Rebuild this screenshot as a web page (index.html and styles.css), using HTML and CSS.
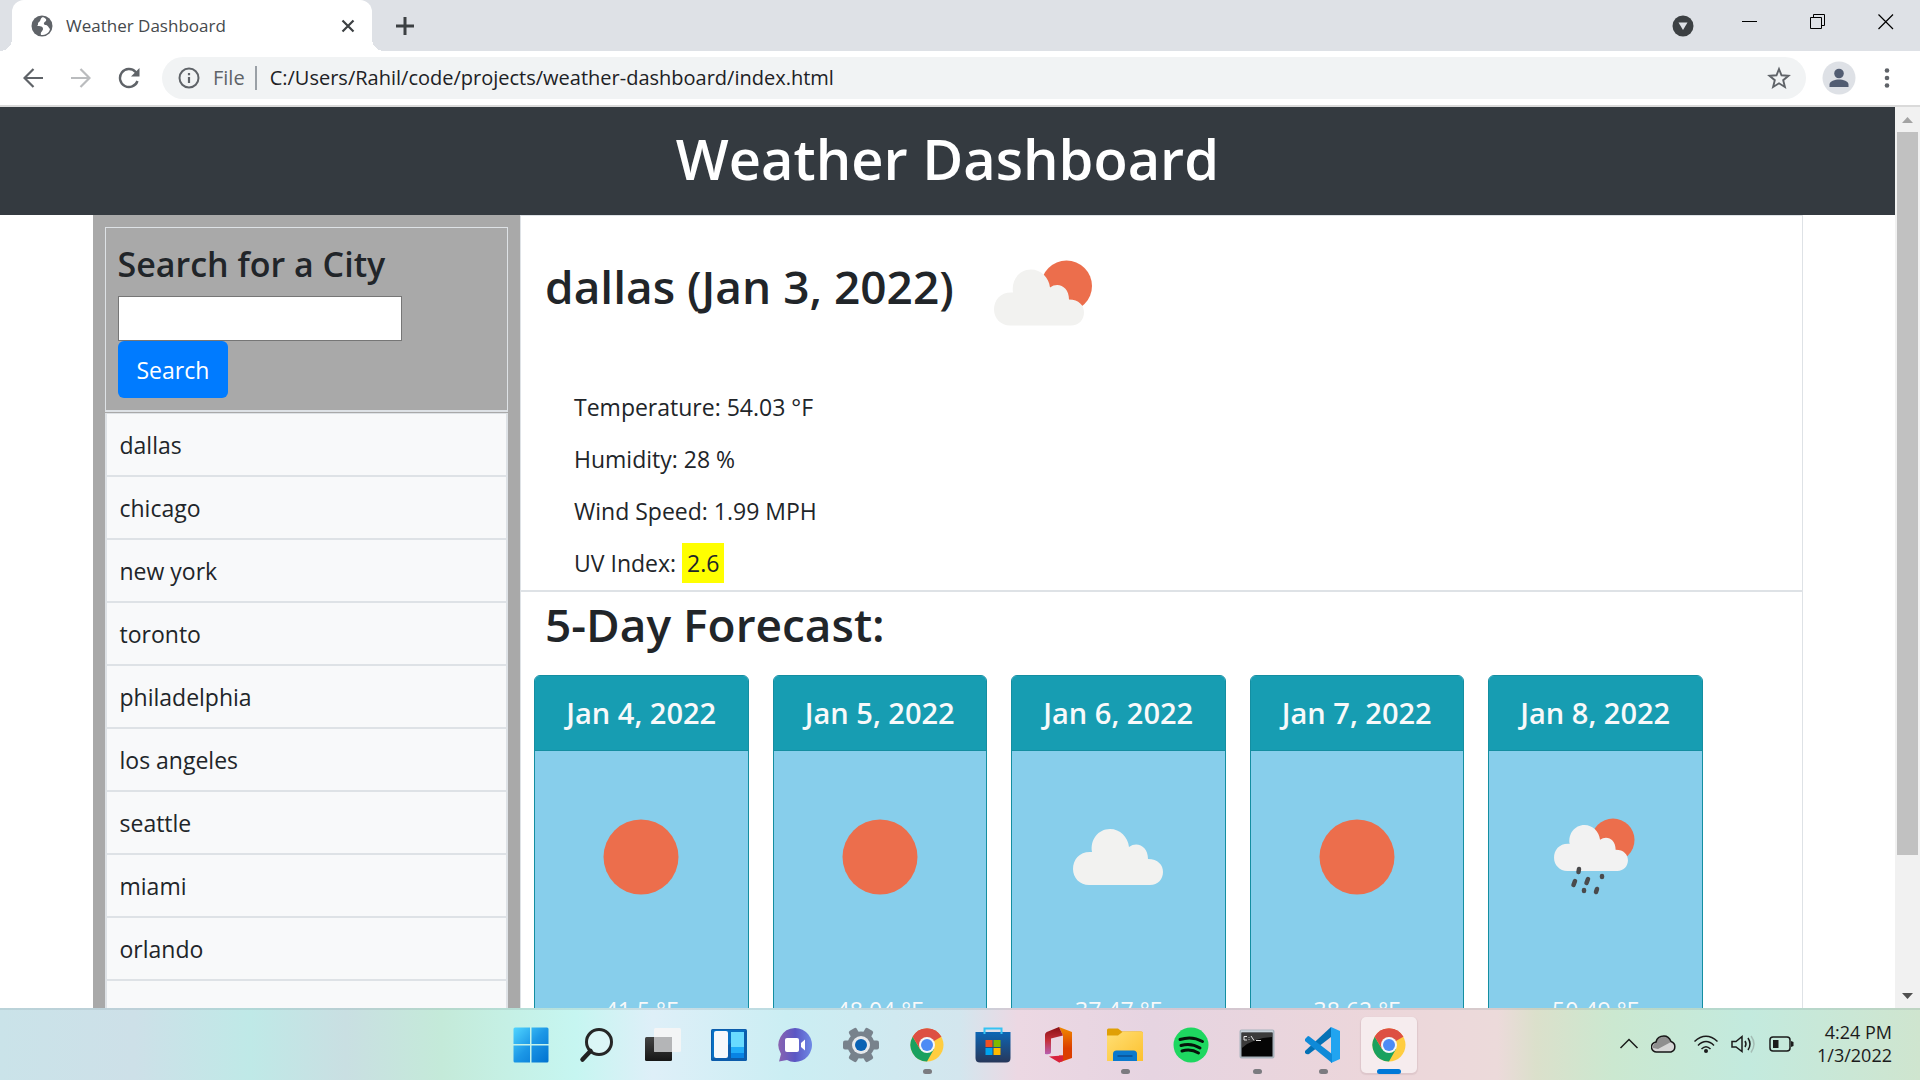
FILE: index.html
```html
<!DOCTYPE html>
<html lang="en">
<head>
<meta charset="utf-8">
<title>Weather Dashboard</title>
<link rel="stylesheet" href="styles.css">
</head>
<body>
<svg class="defs" aria-hidden="true">
  <defs>
    <symbol id="cloud" viewBox="0 0 90 56">
      <path d="M16 56C7 56 0 49 0 40C0 30 7 22 19 23C17 11 25 0 37 0C47 0 55 8 56 18C64 12 75 17 75 30C85 30 90 36 90 43C90 50 85 56 77 56Z"/>
    </symbol>
    <symbol id="chrome" viewBox="0 0 34 34">
      <circle cx="17" cy="17" r="16.5" fill="#ffcd40"/>
      <path d="M17 17L2.7 8.7A16.5 16.5 0 0 1 31.3 8.7Z" fill="#dd4f43"/>
      <path d="M10 21L2.7 8.700A16.5 16.5 0 0 0 17 33.500L24 21Z" fill="#19a15f"/>
      <path d="M17 9H31.4A16.5 16.5 0 0 0 2.7 8.7L10 21Z" fill="#dd4f43"/>
      <circle cx="17" cy="17" r="8" fill="#f4f6f8"/>
      <circle cx="17" cy="17" r="6" fill="#4c8bf5"/>
    </symbol>
    <linearGradient id="winBlue" x1="0" y1="0" x2="1" y2="1"><stop offset="0" stop-color="#50d5ff"/><stop offset=".5" stop-color="#1c97e6"/><stop offset="1" stop-color="#0072d0"/></linearGradient>
    <linearGradient id="darkBox" x1="0" y1="0" x2="0" y2="1"><stop offset="0" stop-color="#444"/><stop offset="1" stop-color="#161616"/></linearGradient>
    <linearGradient id="chatFill" x1="0" y1="0" x2="1" y2="0"><stop offset="0" stop-color="#8a63b0"/><stop offset=".5" stop-color="#5b57c4"/><stop offset="1" stop-color="#6f8ae6"/></linearGradient>
    <linearGradient id="storeFill" x1="0" y1="0" x2="0" y2="1"><stop offset="0" stop-color="#0d66b5"/><stop offset="1" stop-color="#27375a"/></linearGradient>
    <linearGradient id="officeRight" x1="0" y1="0" x2="0" y2="1"><stop offset="0" stop-color="#f08a00"/><stop offset=".6" stop-color="#dc3e00"/></linearGradient>
    <linearGradient id="officeLeft" x1="0" y1="0" x2="0" y2="1"><stop offset="0" stop-color="#8a0f14"/><stop offset=".5" stop-color="#c5303a"/><stop offset="1" stop-color="#b75fb0"/></linearGradient>
    <linearGradient id="folderFill" x1="0" y1="0" x2="1" y2="1"><stop offset="0" stop-color="#ffdf75"/><stop offset="1" stop-color="#fdc12f"/></linearGradient>
  </defs>
</svg>

<div class="tabstrip">
  <div class="tab">
    <svg width="22" height="22" viewBox="0 0 22 22"><circle cx="11" cy="11" r="10.5" fill="#5f6368"/><path d="M12 2C9 3 10 6 8 7C6 8 8 10 6 11C9 11 12 11 12 14C12 16 9 17 10 20C15 20 18 18 19 14C17 12 17 10 14 10C12 9 13 7 15 6C16 4 14 3 12 2Z" fill="#fff"/><path d="M3 11C5 12 8 12 9 14C10 16 8 17 9 19C5 18 3 15 3 11Z" fill="#5f6368"/></svg>
    <span class="tab-title">Weather Dashboard</span>
    <button class="icon-btn" aria-label="Close tab"><svg width="14" height="14" viewBox="0 0 14 14"><path d="M1.500 1.500L12.500 12.500M12.500 1.500L1.500 12.500" stroke="#3c4043" stroke-width="2.200"/></svg></button>
  </div>
  <button class="icon-btn new-tab" aria-label="New tab"><svg width="18" height="18" viewBox="0 0 18 18"><path d="M9 0V18M0 9H18" stroke="#3c4043" stroke-width="3"/></svg></button>
  <div class="window-controls">
    <button class="icon-btn tab-search" aria-label="Search tabs"><svg width="22" height="22" viewBox="0 0 22 22"><circle cx="11" cy="11" r="10.500" fill="#3c4043"/><path d="M6.500 7.500H15.500L11 15Z" fill="#dee1e6"/></svg></button>
    <button class="icon-btn" aria-label="Minimize"><svg width="16" height="16" viewBox="0 0 16 16"><path d="M0 7.500H15" stroke="#000"/></svg></button>
    <button class="icon-btn" aria-label="Restore"><svg width="16" height="16" viewBox="0 0 16 16"><path d="M.5 3.500H11.500V14.500H.5ZM3.500 3.500V.5H14.500V11.500H11.500" fill="none" stroke="#000"/></svg></button>
    <button class="icon-btn" aria-label="Close"><svg width="16" height="16" viewBox="0 0 16 16"><path d="M.5 .5L15 15M15 .5L.5 15" stroke="#000" stroke-width="1.200"/></svg></button>
  </div>
</div>

<div class="toolbar">
  <button class="icon-btn nav-btn" aria-label="Back"><svg width="20" height="20" viewBox="0 0 20 20"><path d="M20 10H2M10.500 1L1.500 10L10.500 19" fill="none" stroke="#5f6368" stroke-width="2.200"/></svg></button>
  <button class="icon-btn nav-btn" aria-label="Forward"><svg width="20" height="20" viewBox="0 0 20 20"><path d="M0 10H18M9.500 1L18.500 10L9.500 19" fill="none" stroke="#babcbe" stroke-width="2.200"/></svg></button>
  <button class="icon-btn nav-btn" aria-label="Reload"><svg width="22" height="22" viewBox="0 0 22 22"><path d="M19.500 14A9 9 0 1 1 17.500 4.800L19 6.500" fill="none" stroke="#5f6368" stroke-width="2.400"/><path d="M21.500 1V9.500H13Z" fill="#5f6368"/></svg></button>
  <div class="omnibox">
    <svg width="22" height="22" viewBox="0 0 22 22"><circle cx="11" cy="11" r="9.500" fill="none" stroke="#5f6368" stroke-width="2"/><path d="M11 10V16M11 6V8.200" stroke="#5f6368" stroke-width="2.200"/></svg>
    <span class="scheme">File</span>
    <input class="url" type="text" aria-label="Address" value="C:/Users/Rahil/code/projects/weather-dashboard/index.html">
    <button class="icon-btn" aria-label="Bookmark"><svg width="24" height="24" viewBox="0 0 24 24"><path d="M12 3L14.500 9.300L21.500 9.800L16.200 14.200L17.900 21L12 17.300L6.100 21L7.800 14.200L2.500 9.800L9.500 9.300Z" fill="none" stroke="#5f6368" stroke-width="1.900"/></svg></button>
  </div>
  <button class="icon-btn avatar" aria-label="Profile"><svg width="34" height="34" viewBox="0 0 34 34"><circle cx="17" cy="17" r="16.500" fill="#dee1e6"/><circle cx="17" cy="12.500" r="4.800" fill="#525d72"/><path d="M7.500 26V23.500C7.500 20 13 18.500 17 18.500S26.500 20 26.500 23.500V26Z" fill="#525d72"/></svg></button>
  <button class="icon-btn" aria-label="Menu"><svg width="6" height="22" viewBox="0 0 6 22"><g fill="#5f6368"><circle cx="3" cy="3.500" r="2.300"/><circle cx="3" cy="11" r="2.300"/><circle cx="3" cy="18.500" r="2.300"/></g></svg></button>
</div>

<div class="viewport">
  <div class="page">
    <header class="banner"><h1>Weather Dashboard</h1></header>
    <div class="container">
      <aside class="sidebar">
        <form class="search">
          <label for="city">Search for a City</label>
          <input id="city" type="text">
          <button type="button">Search</button>
        </form>
        <ul class="history">
          <li>dallas</li><li>chicago</li><li>new york</li><li>toronto</li><li>philadelphia</li><li>los angeles</li><li>seattle</li><li>miami</li><li>orlando</li><li></li>
        </ul>
      </aside>
      <main>
        <section class="current">
          <div class="current-head">
            <h2>dallas (Jan 3, 2022)</h2>
            <svg width="150" height="150" viewBox="0 0 150 150"><circle cx="94.500" cy="70" r="25.500" fill="#ec6e4c"/><use href="#cloud" x="22" y="53" width="90" height="57" fill="#f2f2f0"/></svg>
          </div>
          <p>Temperature: 54.03 °F</p>
          <p>Humidity: 28 %</p>
          <p>Wind Speed: 1.99 MPH</p>
          <p>UV Index: <span class="uv">2.6</span></p>
        </section>
        <section class="forecast">
          <h2>5-Day Forecast:</h2>
          <div class="cards">
            <article class="card"><h3>Jan 4, 2022</h3><svg width="150" height="150" viewBox="0 0 150 150"><circle cx="75" cy="75" r="37.500" fill="#ec6e4c"/></svg><p>41.5 °F</p></article>
            <article class="card"><h3>Jan 5, 2022</h3><svg width="150" height="150" viewBox="0 0 150 150"><circle cx="75" cy="75" r="37.500" fill="#ec6e4c"/></svg><p>48.04 °F</p></article>
            <article class="card"><h3>Jan 6, 2022</h3><svg width="150" height="150" viewBox="0 0 150 150"><use href="#cloud" x="30" y="47" width="90" height="56" fill="#f2f2f0"/></svg><p>37.47 °F</p></article>
            <article class="card"><h3>Jan 7, 2022</h3><svg width="150" height="150" viewBox="0 0 150 150"><circle cx="75" cy="75" r="37.500" fill="#ec6e4c"/></svg><p>38.62 °F</p></article>
            <article class="card"><h3>Jan 8, 2022</h3><svg width="150" height="150" viewBox="0 0 150 150"><circle cx="93" cy="58" r="21.500" fill="#ec6e4c"/><use href="#cloud" x="34" y="43" width="74" height="46" fill="#f2f2f2"/><path d="M59 87L58.500 90M55 99L53.500 103M68 97L66.500 101M82 94V95M64 108V109M77 107L76 110" stroke="#4a4a4c" stroke-width="4.500" stroke-linecap="round"/></svg><p>50.49 °F</p></article>
          </div>
        </section>
      </main>
    </div>
  </div>
  <div class="scrollbar">
    <svg width="25" height="25" viewBox="0 0 25 25"><path d="M7 16L12.500 10L18 16Z" fill="#a3a3a3"/></svg>
    <div class="track"><div class="thumb"></div></div>
    <svg width="25" height="25" viewBox="0 0 25 25"><path d="M7 10L12.500 16L18 10Z" fill="#505050"/></svg>
  </div>
</div>

<footer class="taskbar">
  <nav class="apps">
    <button class="app" aria-label="Start"><svg width="36" height="36" viewBox="0 0 36 36"><path d="M2 .5H17V17H.5V2Q.5 .5 2 .5ZM18.500 .5H34Q35.500 .5 35.500 2V17H18.500ZM.5 18.500H17V35.500H2Q.5 35.500 .5 34ZM18.500 18.500H35.500V34Q35.500 35.500 34 35.500H18.500Z" fill="url(#winBlue)"/></svg></button>
    <button class="app" aria-label="Search"><svg width="36" height="36" viewBox="0 0 36 36"><circle cx="20" cy="15" r="12.500" fill="#e9f7f9" fill-opacity=".5" stroke="#262626" stroke-width="3"/><path d="M11.500 24L3.500 32.500" stroke="#222" stroke-width="4.500" stroke-linecap="round"/></svg></button>
    <button class="app" aria-label="Task view"><svg width="36" height="36" viewBox="0 0 36 36"><rect y="10" width="27" height="24" rx="1.500" fill="url(#darkBox)"/><rect x="9" y="1" width="27" height="24" rx="1.500" fill="#f4f4f6" fill-opacity=".95"/><path d="M9 10H27V25H10.500Q9 25 9 23.500Z" fill="#b4b5b7"/></svg></button>
    <button class="app" aria-label="Widgets"><svg width="36" height="36" viewBox="0 0 36 36"><rect y="2" width="36" height="32" rx="1.500" fill="#0c5cab"/><path d="M1 3H35L1 32Z" fill="#0870c4"/><rect x="3" y="4" width="14" height="27" rx="2" fill="#f6f8fb"/><path d="M20 5H33V20H20Z" fill="#69dbff"/><path d="M20 20H33V26H20Z" fill="#20acf8"/><path d="M20 26H33V31H20Z" fill="#0883e4"/></svg></button>
    <button class="app" aria-label="Chat"><svg width="36" height="36" viewBox="0 0 36 36"><path d="M18 1A17 17 0 1 1 10 33L2 34.500L4 27A17 17 0 0 1 18 1Z" fill="url(#chatFill)"/><rect x="8" y="11" width="14" height="14" rx="2" fill="#fff"/><path d="M24 16L28 12.500V23.500L24 20Z" fill="#fff"/></svg></button>
    <button class="app" aria-label="Settings"><svg width="36" height="36" viewBox="0 0 36 36"><g fill="#78828c"><circle cx="18" cy="18" r="13.500"/><rect x="0" y="13.500" width="36" height="9" rx="2"/><rect x="0" y="13.500" width="36" height="9" rx="2" transform="rotate(60 18 18)"/><rect x="0" y="13.500" width="36" height="9" rx="2" transform="rotate(120 18 18)"/></g><circle cx="18" cy="18" r="9" fill="#e6e9ec"/><circle cx="18" cy="18" r="6" fill="#0a62b4"/></svg></button>
    <button class="app running" aria-label="Chrome"><svg width="34" height="34"><use href="#chrome"/></svg></button>
    <button class="app" aria-label="Store"><svg width="36" height="36" viewBox="0 0 36 36"><path d="M.5 5H35.500V31Q35.500 35.500 31 35.500H5Q.5 35.500 .5 31Z" fill="url(#storeFill)"/><path d="M9.500 7V1.500H26.500V7" fill="none" stroke="#35c3f3" stroke-width="2"/><path d="M10.500 13H17.500V20H10.500Z" fill="#f25022"/><path d="M18.500 13H25.500V20H18.500Z" fill="#7fba00"/><path d="M10.500 21H17.500V28H10.500Z" fill="#00a4ef"/><path d="M18.500 21H25.500V28H18.500Z" fill="#ffb900"/></svg></button>
    <button class="app" aria-label="Office"><svg width="36" height="36" viewBox="0 0 36 36"><path d="M18 0L31 5V31L18 35.500V28.500H22V8.500Z" fill="url(#officeRight)"/><path d="M18 0L22 8.500L10 11.500V25Q10 28 4 27V8Q4 5.500 7 4.500Z" fill="url(#officeLeft)"/><path d="M8 29.500Q14 29 22 28.500V34L18 35.500Z" fill="#d8213c"/></svg></button>
    <button class="app running" aria-label="File Explorer"><svg width="36" height="36" viewBox="0 0 36 36"><path d="M0 3Q0 1.500 1.500 1.500H11L15 4.500H34Q36 4.500 36 6.500V12H0Z" fill="#e0a005"/><path d="M0 8.500H11L16 4.500H34.500Q36 4.500 36 6V34H0Z" fill="url(#folderFill)"/><path d="M6 34V27Q6 23.500 9.500 23.500H26.500Q30 23.500 30 27V34Z" fill="#0b79cd"/><path d="M10.500 29H25.500" stroke="#0b4f91" stroke-width="1.500"/></svg></button>
    <button class="app" aria-label="Spotify"><svg width="36" height="36" viewBox="0 0 36 36"><circle cx="18" cy="18" r="17.500" fill="#1ed760"/><path d="M7 12.500Q19 8.500 29.500 14.500M8 18.500Q18 15.500 27 21M9 24Q18 21.500 25.500 26" fill="none" stroke="#06130a" stroke-width="3" stroke-linecap="round"/></svg></button>
    <button class="app running" aria-label="Command Prompt"><svg width="36" height="36" viewBox="0 0 36 36"><rect x="1.500" y="3.500" width="33" height="27" rx="1" fill="#050505" stroke="#aab4bd" stroke-width="2"/><path d="M2 4.500H34" stroke="#c8d2da" stroke-width="2"/><path d="M3 6H33V10Q14 11 3 21Z" fill="#3b3b3b"/><path d="M8 9.500H5V13H8M10 10V10.700M10 12.300V13M12 9L15 13.500M17 13.500H22" fill="none" stroke="#e8e8e8" stroke-width="1"/></svg></button>
    <button class="app running" aria-label="Visual Studio Code"><svg width="36" height="36" viewBox="0 0 36 36"><path d="M26 0L35 4V32L26 36Z" fill="#21a4f0"/><path d="M0 24L26 0V10L4 27Q2 28 0 26Z" fill="#0471b5"/><path d="M0 12L3 9Q4 9 5 10L27 27V36L0 14Z" fill="#0f8ad8"/></svg></button>
    <button class="app running active" aria-label="Chrome window"><svg width="34" height="34"><use href="#chrome"/></svg></button>
  </nav>
  <div class="tray">
    <svg width="20" height="24" viewBox="0 0 20 24"><path d="M1.500 16L10 7.500L18.500 16" fill="none" stroke="#1b1b1b" stroke-width="1.500"/></svg>
    <svg width="26" height="24" viewBox="0 0 26 24"><path d="M6 20A5 5 0 0 1 5 10C6 5.500 10 4 13 4S18.500 6 20 9.500A5.500 5.500 0 0 1 20 20Z" fill="#d6d6d6"/><path d="M5 10.500C7 5 10 4 13 4S18.500 6 20 10L7 17L2 16Q1.500 12 5 10.500Z" fill="#8f8f8f"/><path d="M6 20A5 5 0 0 1 5 10C6 5.500 10 4 13 4S18.500 6 20 9.500A5.500 5.500 0 0 1 20 20Z" fill="none" stroke="#161616" stroke-width="1.500"/></svg>
    <svg class="wifi" width="26" height="24" viewBox="0 0 26 24"><path d="M1.500 9.500Q13 -1 24.500 9.500M5 13.500Q13 5.500 21 13.500M8.500 17Q13 12.500 17.500 17" fill="none" stroke="#1b1b1b" stroke-width="1.500"/><circle cx="13" cy="19" r="2" fill="#1b1b1b"/></svg>
    <svg width="26" height="24" viewBox="0 0 26 24"><path d="M1 9.500H5L11 4.500V19.500L5 15H1ZM14 9Q16 12 14 15M17 6Q21 12 17 18" fill="none" stroke="#1b1b1b" stroke-width="1.500"/><path d="M20 4Q26 12 20 20.500" fill="none" stroke="#a5bdb5" stroke-width="1.500"/></svg>
    <svg width="26" height="24" viewBox="0 0 26 24"><rect x="1" y="5" width="20" height="14" rx="3" fill="none" stroke="#1b1b1b" stroke-width="1.500"/><path d="M4 8H9.500V16H4Z" fill="#1b1b1b"/><path d="M22 9L24.500 10V14L22 15Z" fill="#1b1b1b"/></svg>
    <div class="clock"><span>4:24 PM</span><span>1/3/2022</span></div>
  </div>
</footer>
</body>
</html>
```
FILE: styles.css
```css
* { box-sizing: border-box; }

body {
  margin: 0;
  height: 100vh;
  display: flex;
  flex-direction: column;
  overflow: hidden;
  background: #fff;
  color: #212529;
  font-family: "Open Sans", "Noto Sans", sans-serif;
  font-size: 23px;
  line-height: 36px;
}

h1, h2, h3, p, ul { margin: 0; padding: 0; }
h1, h2, h3 { font-weight: 600; }
svg { display: block; flex: none; }
button, input { font: inherit; }
.defs { position: absolute; width: 0; height: 0; }
.icon-btn { display: flex; padding: 0; border: 0; background: none; }

/* Browser window */
.tabstrip {
  display: flex;
  flex: none;
  align-items: center;
  height: 51px;
  padding: 0 26px 0 12px;
  background: #dee1e6;
}
.tab {
  display: flex;
  align-items: center;
  gap: 13px;
  position: relative;
  width: 360px;
  height: 51px;
  padding: 0 17px 0 19px;
  border-radius: 12px 12px 0 0;
  background: #fff;
}
.tab::before, .tab::after {
  content: "";
  position: absolute;
  bottom: 0;
  width: 12px;
  height: 12px;
}
.tab::before { left: -12px; background: radial-gradient(circle at 0 0, transparent 12px, #fff 12px); }
.tab::after { right: -12px; background: radial-gradient(circle at 100% 0, transparent 12px, #fff 12px); }
.tab-title { flex: 1; font-size: 17px; color: #45494d; }
.new-tab { margin-left: 24px; }
.window-controls { display: flex; gap: 52px; margin-left: auto; height: 44px; align-items: center; align-self: flex-start; }
.tab-search { margin: 7px -4px 0 0; }

.toolbar {
  display: flex;
  flex: none;
  align-items: center;
  height: 56px;
  padding: 0 30px 0 9px;
  border-bottom: 2px solid #dadada;
}
.nav-btn { width: 48px; justify-content: center; }
.omnibox {
  display: flex;
  flex: 1;
  align-items: center;
  height: 42px;
  margin: 0 16px 0 9px;
  padding: 0 15px 0 16px;
  border-radius: 21px;
  background: #f1f3f4;
  font-size: 20px;
}
.scheme { margin-left: 13px; padding-right: 10px; border-right: 2px solid #9aa0a6; line-height: 24px; color: #5f6368; }
.url { flex: 1; min-width: 0; margin-left: 13px; padding: 0; border: 0; background: none; color: #202124; }
.avatar { margin-right: 28px; }

.viewport { display: flex; flex: 1; min-height: 0; overflow: hidden; }
.page { flex: 1; min-width: 0; }
.scrollbar { display: flex; flex-direction: column; width: 25px; background: #f1f1f1; }
.track { flex: 1; padding: 0 2px; }
.thumb { height: 85%; background: #c1c1c1; }

/* Dashboard */
.banner { padding: 15px 18px 21px; background: #343a40; text-align: center; color: #fff; }
.banner h1 { font-size: 56px; line-height: 72px; }
.container { display: flex; max-width: 1710px; margin: 0 auto; }
.sidebar { flex: none; width: 25%; padding: 12px; background: #a9a9a9; }
.search {
  display: flex;
  flex-direction: column;
  align-items: flex-start;
  padding: 13px 12px 12px;
  border: 1px solid #dee2e6;
  border-bottom-width: 2px;
}
.search label { margin-bottom: 9px; font-size: 34px; font-weight: 600; line-height: 46px; }
.search input { width: 284px; height: 45px; border: 1px solid #767676; background: #fff; }
.search button {
  height: 57px;
  padding: 0 19px;
  border: 0;
  border-radius: 6px;
  background: #007bff;
  color: #fff;
}
.history { margin-top: 1px; border: 1px solid #dee2e6; list-style: none; }
.history li {
  height: 63px;
  padding: 13px;
  border: solid #dee2e6;
  border-width: 0 1px 2px;
  background: #f8f9fa;
}

main { flex: 1; min-width: 0; border: 1px solid #dee2e6; }
.current { padding: 0 24px 7px; border-bottom: 2px solid #dee2e6; }
.current-head { display: flex; gap: 18px; height: 147px; margin-bottom: 24px; }
.current-head h2 { padding-top: 41px; }
h2 { font-size: 46px; line-height: 58px; }
.current p { margin: 0 0 12px 29px; line-height: 40px; }
.current p:last-child { margin-bottom: 0; }
.uv { display: inline-block; padding: 0 5px; background: #ff0; }

.forecast h2 { padding: 3px 24px 22px; }
.cards { display: flex; gap: 24px; padding: 0 99px 0 13px; }
.card {
  flex: 1;
  min-width: 0;
  height: 540px;
  display: flex;
  flex-direction: column;
  align-items: center;
  border: 1px solid #148ea1;
  border-radius: 6px;
  background: #87ceeb;
  color: #f8f9fa;
}
.card h3 {
  align-self: stretch;
  padding: 19px 0;
  border-bottom: 1px solid #148ea1;
  border-radius: 5px 5px 0 0;
  background: #179db2;
  text-align: center;
  font-size: 29px;
}
.card svg { margin: 31px 0 60px; }

/* Taskbar */
.taskbar {
  display: grid;
  grid-template-columns: 1fr auto 1fr;
  flex: none;
  height: 72px;
  border-top: 2px solid rgba(90, 110, 120, .14);
  background: linear-gradient(90deg, #cae3e9, #cde0e8 7%, #bfe9e7 13%, #c9dfe2 18%, #c4ead9 23%, #c6f6f1 30%, #deeff8 34%, #cbeef3 41%, #d3e6ee 50%, #ecd8e3 53%, #e6d4e1 60%, #ecd6da 72%, #ecdada 78%, #dbe0cb 80%, #cbe8d0 84%, #c3eade 91%, #cfe5cf);
}
.apps { grid-column: 2; display: flex; }
.app {
  position: relative;
  display: flex;
  align-items: center;
  justify-content: center;
  width: 66px;
  height: 70px;
  padding: 0;
  border: 0;
  background: none;
}
.app svg { position: relative; }
.running::after {
  content: "";
  position: absolute;
  left: 29px;
  bottom: 6px;
  width: 9px;
  height: 5px;
  border-radius: 3px;
  background: #7b7b80;
}
.active::before {
  content: "";
  position: absolute;
  inset: 7px 5px;
  border-radius: 5px;
  background: #f6ecee;
  box-shadow: 0 1px 1px 1px rgba(120, 90, 100, .12);
}
.active::after { left: 21px; width: 24px; background: #0078d7; }
.tray { display: flex; align-items: center; justify-content: flex-end; gap: 12px; padding: 0 28px 2px 0; color: #1b1b1b; }
.wifi { margin-left: 4px; }
.clock { display: flex; flex-direction: column; margin-left: 10px; font-size: 18px; line-height: 23px; text-align: right; }
```
